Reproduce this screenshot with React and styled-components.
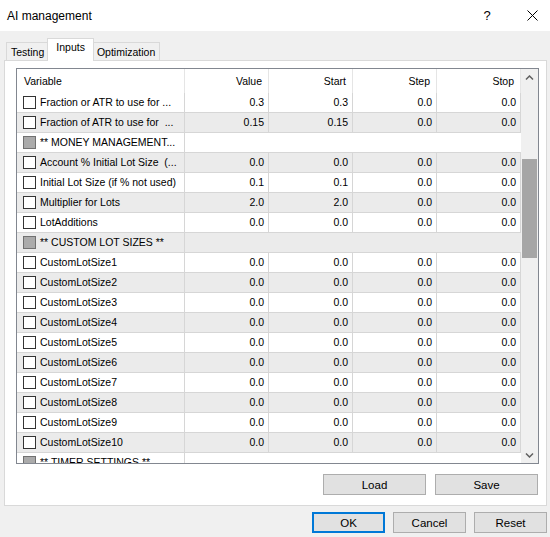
import React from 'react'
import styled, { createGlobalStyle } from 'styled-components'

const GlobalStyle = createGlobalStyle`
  html, body { margin: 0; padding: 0; background: #f0f0f0; }
  body {
    font-family: "Liberation Sans", Arial, sans-serif;
    font-size: 10.5px;
    color: #000;
  }
  * { box-sizing: border-box; }
`

const Window = styled.div`
  width: 550px; height: 537px;
  display: flex; flex-direction: column;
  background: #f0f0f0;
  overflow: hidden;
`

const TitleBar = styled.div`
  height: 31px;
  flex: none;
  background: #fff;
  display: flex; align-items: center;
  padding-left: 7px;
  font-size: 12px;
  .title { flex: 1; }
`

const TitleButton = styled.div`
  width: 36px; height: 31px;
  display: flex; align-items: center; justify-content: center;
  margin-left: ${p => p.$gap || 0}px;
  font-size: 13px;
  color: #000;
`

const Content = styled.div`
  flex: 1;
  display: flex; flex-direction: column;
  padding: 0 3px 0 4px;
`

const TabRow = styled.div`
  display: flex; align-items: flex-end;
  height: 29px;
  padding-left: 2px;
`

const Tab = styled.div`
  position: relative;
  height: ${p => p.$active ? 23 : 18}px;
  padding: 0 ${p => p.$active ? 8 : 4}px;
  margin: 0 ${p => p.$active ? -2 : 0}px ${p => p.$active ? -1 : 0}px;
  z-index: ${p => p.$active ? 2 : 1};
  border: 1px solid #d9d9d9;
  border-bottom: none;
  background: ${p => p.$active ? '#fff' : '#f0f0f0'};
  display: flex; align-items: ${p => p.$active ? 'flex-start' : 'center'};
  padding-top: ${p => p.$active ? 2 : 0}px;
  font-size: 10.5px;
  white-space: nowrap;
`

const Panel = styled.div`
  height: 446px;
  border: 1px solid #d9d9d9;
  background: #fff;
  padding: 7px 7px 0 11px;
  display: flex; flex-direction: column;
`

const Table = styled.div`
  height: 396px;
  border: 1px solid #828790;
  display: flex;
  background: #fff;
`

const Grid = styled.div`
  width: 504px;
  overflow: hidden;
`

const cols = '168px 84px 84px 84px 84px'

const HeaderRow = styled.div`
  display: grid;
  grid-template-columns: ${cols};
  height: 24px;
`

const HeadCell = styled.div`
  border-right: 1px solid #e5e5e5;
  line-height: 24px;
  padding: 0 6px 0 7px;
  text-align: ${p => p.$left ? 'left' : 'right'};
`

const Row = styled.div`
  display: grid;
  grid-template-columns: ${cols};
  height: 20px;
  background: ${p => p.$shade ? '#ebebeb' : '#fff'};
`

const Cell = styled.div`
  border-right: 1px solid #d6d6d6;
  border-bottom: 1px solid #d6d6d6;
  line-height: 19px;
  padding-right: 4px;
  text-align: right;
  white-space: nowrap;
  overflow: hidden;
`

const VarCell = styled(Cell)`
  display: flex; align-items: center;
  text-align: left;
  padding: 0 0 0 6px;
  white-space: pre;
`

const SpanCell = styled.div`
  grid-column: span 4;
  border-bottom: 1px solid #d6d6d6;
`

const Check = styled.span`
  flex: none;
  width: 13px; height: 13px;
  margin-right: 4px;
  border: 1px solid ${p => p.$section ? '#707070' : '#333'};
  background: ${p => p.$section ? '#ababab' : '#fff'};
`

const Scrollbar = styled.div`
  width: 17px;
  background: #f0f0f0;
  display: flex; flex-direction: column;
`

const Arrow = styled.div`
  height: 17px;
  display: flex; align-items: center; justify-content: center;
  margin-top: ${p => p.$bottom ? 'auto' : 0};
`

const Thumb = styled.div`
  height: 99px;
  margin: 73px 1px 0 1px;
  background: #a6a6a6;
`

const LoadRow = styled.div`
  display: flex; justify-content: flex-end;
  gap: 9px;
  margin-top: 10px;
  padding-right: 1px;
`

const Button = styled.div`
  width: ${p => p.$w}px; height: 21px;
  display: flex; align-items: center; justify-content: center;
  background: #e1e1e1;
  border: ${p => p.$default ? '2px solid #0078d7' : '1px solid #adadad'};
  font-size: 11.5px;
`

const Footer = styled.div`
  display: flex; justify-content: flex-end;
  gap: 8px;
  margin-top: 6px;
`

const Chevron = ({ down }) => (
  <svg width="9" height="6" viewBox="0 0 9 6">
    <polyline
      points={down ? '1,1.5 4.5,5 8,1.5' : '1,4.5 4.5,1 8,4.5'}
      fill="none" stroke="#606060" strokeWidth="1.5"
    />
  </svg>
)

const rows = [
  { name: 'Fraction or ATR to use for ...', v: ['0.3', '0.3', '0.0', '0.0'] },
  { name: 'Fraction of ATR to use for  ...', v: ['0.15', '0.15', '0.0', '0.0'] },
  { name: '** MONEY MANAGEMENT...', section: true },
  { name: 'Account % Initial Lot Size  (...', v: ['0.0', '0.0', '0.0', '0.0'] },
  { name: 'Initial Lot Size (if % not used)', v: ['0.1', '0.1', '0.0', '0.0'] },
  { name: 'Multiplier for Lots', v: ['2.0', '2.0', '0.0', '0.0'] },
  { name: 'LotAdditions', v: ['0.0', '0.0', '0.0', '0.0'] },
  { name: '** CUSTOM LOT SIZES **', section: true },
  ...Array.from({ length: 10 }, (_, i) => ({
    name: `CustomLotSize${i + 1}`, v: ['0.0', '0.0', '0.0', '0.0'],
  })),
  { name: '** TIMER SETTINGS **', section: true },
]

export default function App() {
  return (
    <Window>
      <GlobalStyle />
      <TitleBar>
        <span className='title'>AI management</span>
        <TitleButton>?</TitleButton>
        <TitleButton $gap={9}>
          <svg width="11" height="11" viewBox="0 0 11 11">
            <path d="M0.5 0.5 L10.5 10.5 M10.5 0.5 L0.5 10.5" stroke="#000" strokeWidth="1" />
          </svg>
        </TitleButton>
      </TitleBar>
      <Content>
        <TabRow>
          <Tab>Testing</Tab>
          <Tab $active>Inputs</Tab>
          <Tab>Optimization</Tab>
        </TabRow>
        <Panel>
          <Table>
            <Grid>
              <HeaderRow>
                <HeadCell $left>Variable</HeadCell>
                <HeadCell>Value</HeadCell>
                <HeadCell>Start</HeadCell>
                <HeadCell>Step</HeadCell>
                <HeadCell>Stop</HeadCell>
              </HeaderRow>
              {rows.map((r, i) => (
                <Row key={i} $shade={i % 2 === 1}>
                  <VarCell>
                    <Check $section={r.section} />
                    {r.name}
                  </VarCell>
                  {r.section
                    ? <SpanCell />
                    : r.v.map((x, j) => <Cell key={j}>{x}</Cell>)}
                </Row>
              ))}
            </Grid>
            <Scrollbar>
              <Arrow><Chevron /></Arrow>
              <Thumb />
              <Arrow $bottom><Chevron down /></Arrow>
            </Scrollbar>
          </Table>
          <LoadRow>
            <Button $w={103}>Load</Button>
            <Button $w={103}>Save</Button>
          </LoadRow>
        </Panel>
        <Footer>
          <Button $w={73} $default>OK</Button>
          <Button $w={73}>Cancel</Button>
          <Button $w={73}>Reset</Button>
        </Footer>
      </Content>
    </Window>
  )
}
